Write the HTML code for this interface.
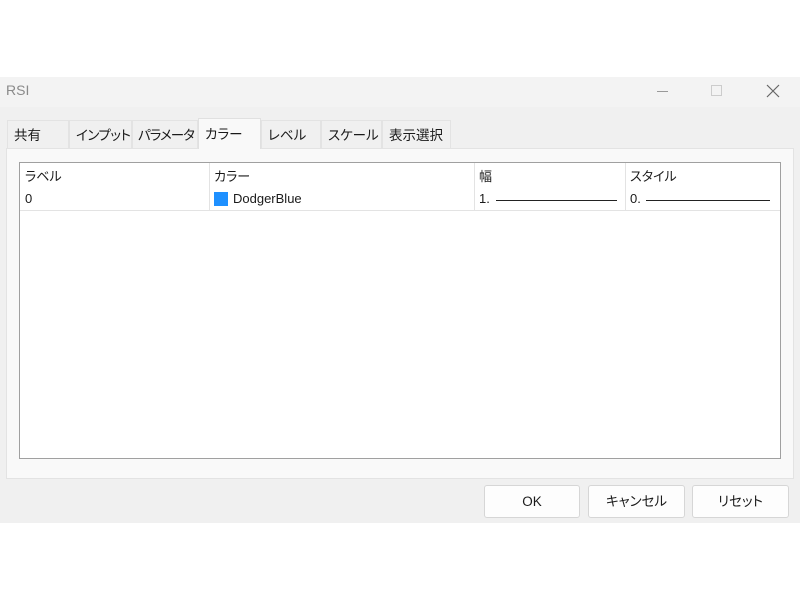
<!DOCTYPE html>
<html><head><meta charset="utf-8"><style>
*{margin:0;padding:0;box-sizing:border-box}
body{width:800px;height:600px;background:#fff;position:relative;overflow:hidden;font-family:"Liberation Sans","Noto Sans CJK JP",sans-serif;font-size:13px;color:#1a1a1a;font-feature-settings:"palt"}
.dlg{position:absolute;left:0;top:77px;width:800px;height:446px;background:#f0f0f0}
.title{position:absolute;left:0;top:0;width:800px;height:30px;background:#f3f3f3}
.title span{position:absolute;left:6px;top:5px;color:#8a8a8a;font-size:14px}
.tab{position:absolute;top:43px;height:28px;background:#f0f0f0;border:1px solid #e3e3e3;border-bottom:none;padding:3px 0 0 6px;font-size:13.5px;white-space:nowrap;overflow:hidden}
.tab.sel{background:#f9f9f9;top:41px;height:31px;border-color:#e0e0e0;padding-top:4px}
.panel{position:absolute;left:6px;top:71px;width:788px;height:331px;background:#f9f9f9;border:1px solid #e3e3e3}
.list{position:absolute;left:19px;top:162px;width:762px;height:297px;background:#fff;border:1px solid #a0a0a0}
.c{position:absolute;font-size:13px;white-space:nowrap}
.vs{position:absolute;top:0;width:1px;height:48px;background:#e3e3e3}
.btn{position:absolute;top:485px;height:33px;background:#fdfdfd;border:1px solid #d6d6d6;border-radius:3px;text-align:center;line-height:31px;font-size:13.5px}
.line{position:absolute;height:1px;background:#222}
</style></head><body>
<div class="dlg">
<div class="title"><span>RSI</span>
<div style="position:absolute;left:657px;top:14px;width:11px;height:1px;background:#999"></div>
<div style="position:absolute;left:711px;top:8px;width:11px;height:11px;border:1px solid #ccc"></div>
<svg style="position:absolute;left:766px;top:7px" width="14" height="14"><path d="M1 1L13 13M13 1L1 13" stroke="#666" stroke-width="1.2"/></svg>
</div>
<div class="panel"></div>
<div class="tab" style="left:7px;width:62px">共有</div>
<div class="tab" style="left:69px;width:63px;letter-spacing:-0.5px">インプット</div>
<div class="tab" style="left:132px;width:66px;letter-spacing:-1px;padding-left:5px">パラメータ</div>
<div class="tab sel" style="left:198px;width:63px">カラー</div>
<div class="tab" style="left:261px;width:60px">レベル</div>
<div class="tab" style="left:321px;width:61px">スケール</div>
<div class="tab" style="left:382px;width:69px">表示選択</div>
</div>
<div class="list">
<div style="position:absolute;left:0;top:47px;width:760px;height:1px;background:#e3e3e3"></div>
<div class="vs" style="left:189px"></div><div class="vs" style="left:454px"></div><div class="vs" style="left:605px"></div>
<div class="c" style="left:5px;top:3px">ラベル</div>
<div class="c" style="left:194px;top:3px">カラー</div>
<div class="c" style="left:459px;top:3px">幅</div>
<div class="c" style="left:610px;top:3px">スタイル</div>
<div class="c" style="left:5px;top:28px">0</div>
<div style="position:absolute;left:194px;top:29px;width:14px;height:14px;background:#1e90ff"></div>
<div class="c" style="left:213px;top:28px">DodgerBlue</div>
<div class="c" style="left:459px;top:28px">1.</div>
<div class="line" style="left:476px;top:37px;width:121px"></div>
<div class="c" style="left:610px;top:28px">0.</div>
<div class="line" style="left:626px;top:37px;width:124px"></div>
</div>
<div class="btn" style="left:484px;width:96px">OK</div>
<div class="btn" style="left:588px;width:97px">キャンセル</div>
<div class="btn" style="left:692px;width:97px">リセット</div>
</body></html>
